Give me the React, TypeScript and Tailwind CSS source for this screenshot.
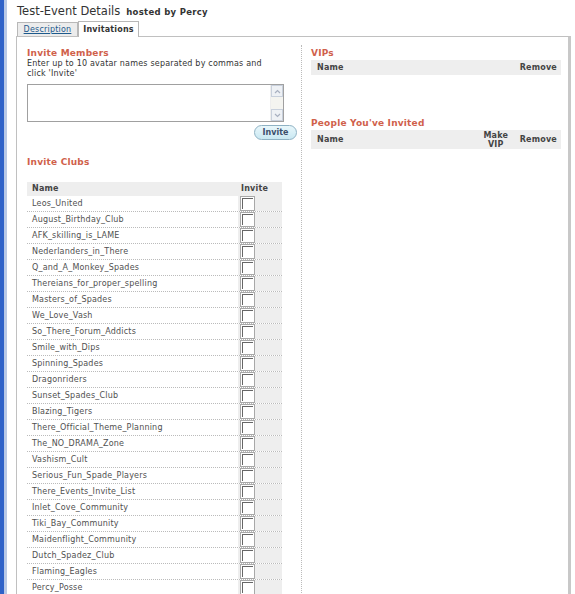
import React from "react";

const clubs = [
  "Leos_United",
  "August_Birthday_Club",
  "AFK_skilling_is_LAME",
  "Nederlanders_in_There",
  "Q_and_A_Monkey_Spades",
  "Thereians_for_proper_spelling",
  "Masters_of_Spades",
  "We_Love_Vash",
  "So_There_Forum_Addicts",
  "Smile_with_Dips",
  "Spinning_Spades",
  "Dragonriders",
  "Sunset_Spades_Club",
  "Blazing_Tigers",
  "There_Official_Theme_Planning",
  "The_NO_DRAMA_Zone",
  "Vashism_Cult",
  "Serious_Fun_Spade_Players",
  "There_Events_Invite_List",
  "Inlet_Cove_Community",
  "Tiki_Bay_Community",
  "Maidenflight_Community",
  "Dutch_Spadez_Club",
  "Flaming_Eagles",
  "Percy_Posse",
];

function Check() {
  return (
    <div className="w-[15px] h-[15px] border border-[#a8a8a8] bg-white p-[1px]">
      <div className="w-full h-full border-t-[1.5px] border-l-[1.5px] border-t-[#666] border-l-[#666]" />
    </div>
  );
}

export default function App() {
  return (
    <div className="flex min-h-[594px] bg-white font-['DejaVu_Sans',sans-serif] text-[#333] overflow-hidden">
      <div className="w-[4px] bg-[#2f62c8] shrink-0" />
      <div className="w-[3px] bg-[#b9c9e6] shrink-0" />
      <div className="pl-[9px] pt-[3px] flex flex-col">
        <div className="flex items-baseline h-[18px] pl-[1px]">
          <span className="text-[11.5px] text-[#333]">Test-Event Details</span>
          <span className="text-[8.5px] font-bold ml-[6px] tracking-[0.3px] text-[#333]">hosted by Percy</span>
        </div>
        <div className="flex items-end h-[15px] pl-[1px] relative z-10">
          <div className="w-[61px] h-[14px] border border-[#b8b8b8] border-b-0 bg-[#ececec] flex items-center justify-center">
            <span className="text-[8px] tracking-[0.2px] text-[#1e5a8c] underline">Description</span>
          </div>
          <div className="w-[61px] h-[16px] border border-[#b8b8b8] border-b-0 bg-white flex items-center justify-center -mb-[1px]">
            <span className="text-[8px] tracking-[0.2px] font-bold text-[#333]">Invitations</span>
          </div>
        </div>
        <div className="w-[555px] border border-[#c0c0c0] border-r-[3px] border-r-[#c8c8c8] flex min-h-[570px]">
          <div className="w-[284px] pl-[10px] pt-[10px] flex flex-col">
            <div className="text-[9px] tracking-[0.2px] font-bold text-[#d0614b] leading-[12px]">Invite Members</div>
            <div className="text-[8px] tracking-[0.2px] leading-[10px] w-[256px] mt-[0px]">
              Enter up to 10 avatar names separated by commas and click 'Invite'
            </div>
            <div className="mt-[5px] w-[257px] h-[38px] border border-[#a0a0a0] flex justify-end bg-white">
              <div className="w-[13px] h-full bg-[#f4f4f0] flex flex-col justify-between border-l border-[#eee]">
                <div className="h-[12px] border border-[#c8d0dc] bg-[#eef1f5] flex items-center justify-center">
                  <svg width="7" height="5" viewBox="0 0 7 5"><path d="M1 4 L3.5 1.5 L6 4" fill="none" stroke="#a8b0c0" strokeWidth="1.2" /></svg>
                </div>
                <div className="h-[12px] border border-[#c8d0dc] bg-[#eef1f5] flex items-center justify-center">
                  <svg width="7" height="5" viewBox="0 0 7 5"><path d="M1 1 L3.5 3.5 L6 1" fill="none" stroke="#a8b0c0" strokeWidth="1.2" /></svg>
                </div>
              </div>
            </div>
            <div className="flex justify-end w-[270px] mt-[3px]">
              <div className="w-[43px] h-[15px] rounded-full border border-[#8fb2c4] bg-gradient-to-b from-[#e9f7fb] to-[#c9e8f2] flex items-center justify-center">
                <span className="text-[8px] font-bold text-[#3b4f6b]">Invite</span>
              </div>
            </div>
            <div className="text-[9px] tracking-[0.2px] font-bold text-[#d0614b] leading-[12px] mt-[16px]">Invite Clubs</div>
            <div className="mt-[14px] w-[255px] flex flex-col">
              <div className="h-[14px] bg-[#eeeeee] flex items-center text-[8px] tracking-[0.2px] font-bold text-[#444]">
                <span className="pl-[5px] flex-1">Name</span>
                <span className="w-[44px] pl-[3px]">Invite</span>
              </div>
              {clubs.map((c) => (
                <div key={c} className="h-[16px] flex border-b border-dotted border-[#bbb]">
                  <span className="flex-1 pl-[5px] text-[8px] tracking-[0.2px] leading-[16px] text-[#505050]">{c}</span>
                  <div className="w-[44px] bg-[#eeeeee] pl-[2px] pt-[0px]">
                    <Check />
                  </div>
                </div>
              ))}
            </div>
          </div>
          <div className="w-0 border-l border-dotted border-[#bbb] mt-[8px]" />
          <div className="pl-[9px] pt-[10px] flex flex-col w-[260px]">
            <div className="text-[9px] tracking-[0.2px] font-bold text-[#d0614b] leading-[12px]">VIPs</div>
            <div className="h-[15px] mt-[1px] bg-[#eeeeee] flex items-center text-[8px] tracking-[0.2px] font-bold text-[#444] w-[250px]">
              <span className="pl-[6px] flex-1">Name</span>
              <span className="pr-[4px]">Remove</span>
            </div>
            <div className="text-[9px] tracking-[0.2px] font-bold text-[#d0614b] leading-[12px] mt-[42px]">People You've Invited</div>
            <div className="h-[19px] mt-[1px] bg-[#eeeeee] flex items-center text-[8px] tracking-[0.2px] font-bold text-[#444] w-[250px]">
              <span className="pl-[6px] flex-1">Name</span>
              <span className="text-center leading-[9px] w-[30px]">Make<br />VIP</span>
              <span className="pr-[4px] pl-[9px]">Remove</span>
            </div>
          </div>
        </div>
      </div>
    </div>
  );
}
